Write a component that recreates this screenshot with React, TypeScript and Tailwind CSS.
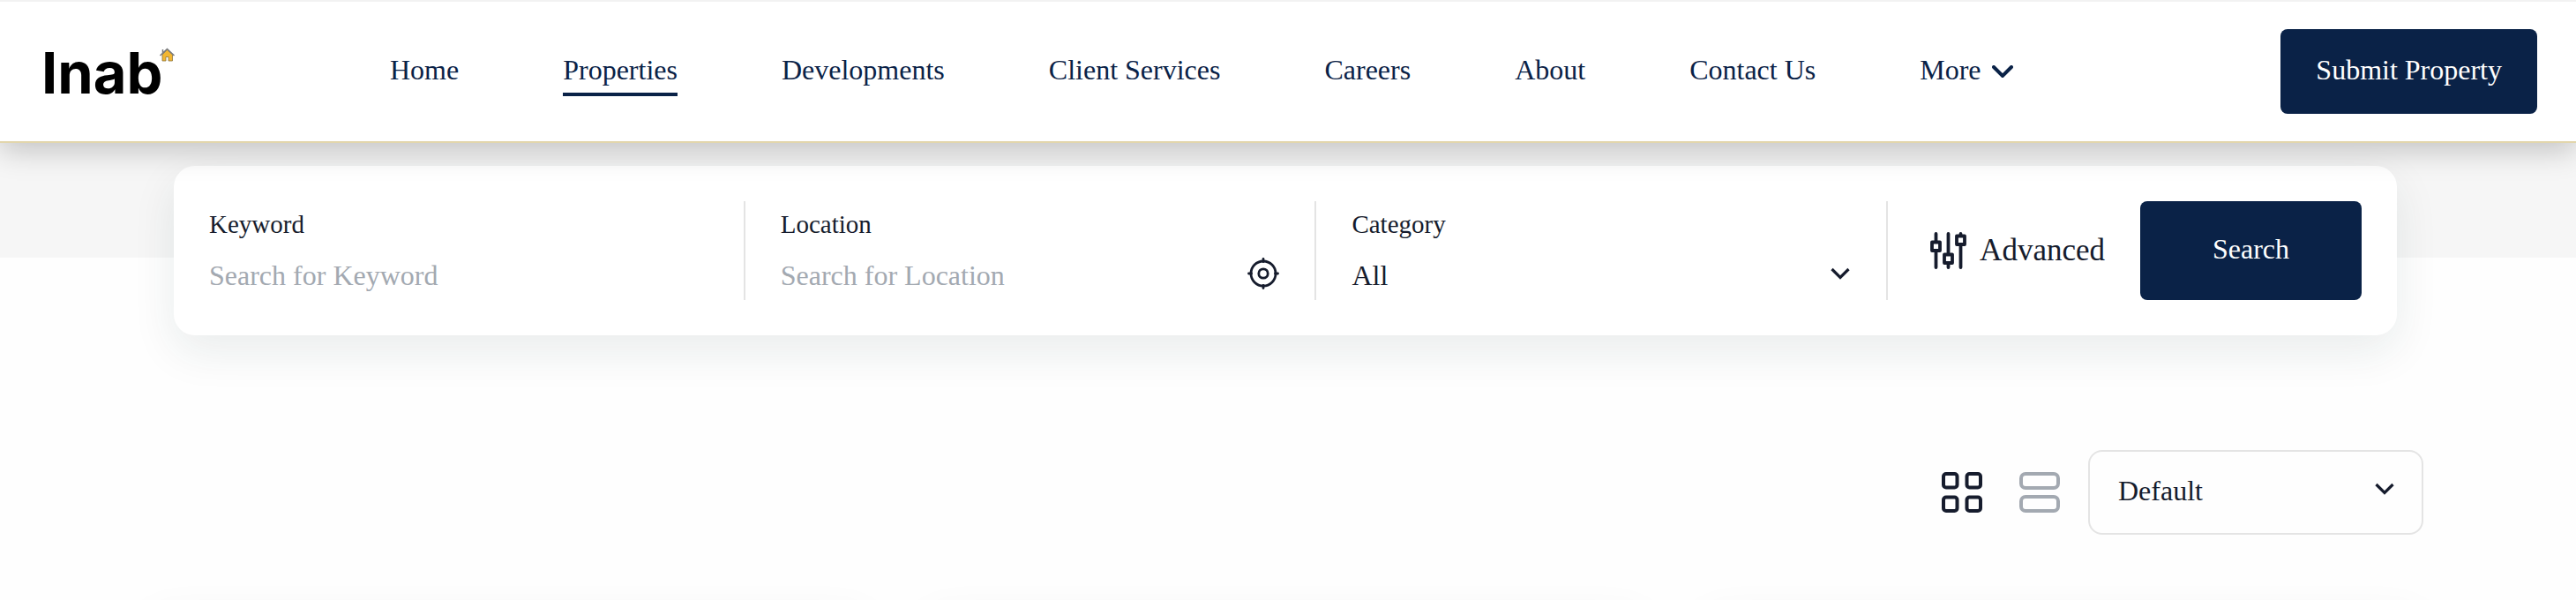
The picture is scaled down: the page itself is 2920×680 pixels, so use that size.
import { useState } from 'react'

const navLinks = ['Home', 'Properties', 'Developments', 'Client Services', 'Careers', 'About', 'Contact Us']

function Chevron({ className = '' }: { className?: string }) {
  return (
    <svg width="24" height="14" viewBox="0 0 24 14" fill="none" className={className} aria-hidden="true">
      <path d="M2 2l10 10L22 2" stroke="currentColor" strokeWidth="4" strokeLinecap="round" />
    </svg>
  )
}

function SelectArrow() {
  return (
    <svg width="24" height="14" viewBox="0 0 24 14" fill="none" className="pointer-events-none mb-1 shrink-0" aria-hidden="true">
      <path d="M2.500 2l9.500 9.500L21.500 2" stroke="currentColor" strokeWidth="3.2" />
    </svg>
  )
}

function SlidersIcon() {
  return (
    <svg width="42" height="42" viewBox="0 0 42 42" fill="none" stroke="currentColor" strokeWidth="3.8" strokeLinecap="round" strokeLinejoin="round" aria-hidden="true">
      <path d="M6.5 2v9M6.5 21.500v18.500M20.500 2v23M20.500 35.500v4.500M34.500 2v2M34.500 14v26" />
      <path d="M2 11.500h9v9.500h-9zM16 25.500h9v9.500h-9zM30 4.500h9v9.500h-9z" />
    </svg>
  )
}

function TargetIcon() {
  return (
    <svg width="36" height="36" viewBox="0 0 36 36" fill="none" stroke="currentColor" strokeWidth="2.8" strokeLinecap="round" aria-hidden="true">
      <circle cx="18" cy="18" r="14" />
      <circle cx="18" cy="18" r="5.200" />
      <path d="M18 1.500v3M18 31.500v3M1.500 18h3M31.500 18h3" />
    </svg>
  )
}

function GridIcon() {
  return (
    <svg width="46" height="46" viewBox="0 0 46 46" fill="none" stroke="currentColor" strokeWidth="4" aria-hidden="true">
      <rect x="2" y="2" width="15.500" height="15.500" rx="3" />
      <rect x="28.500" y="2" width="15.500" height="15.500" rx="3" />
      <rect x="2" y="28.500" width="15.500" height="15.500" rx="3" />
      <rect x="28.500" y="28.500" width="15.500" height="15.500" rx="3" />
    </svg>
  )
}

function ListIcon() {
  return (
    <svg width="46" height="46" viewBox="0 0 46 46" fill="none" stroke="currentColor" strokeWidth="4" aria-hidden="true">
      <rect x="2" y="2" width="42" height="16" rx="5" />
      <rect x="2" y="28" width="42" height="16" rx="5" />
    </svg>
  )
}

function Logo() {
  return (
    <a href="#" aria-label="Inab" className="block">
      <svg width="160" height="88" viewBox="-8 -12 160 88" aria-hidden="true">
        <text x="-3" y="57" fontFamily="Inter, sans-serif" fontWeight="700" fontSize="65">Inab</text>
        <path d="M134 13v7h4v-4.500h3v4.500h4.500v-7l-6-5.500z" fill="#f2b632" stroke="#8a7440" strokeWidth="0.8" />
        <path d="M131.500 14l8-7.500 8 7.500M134.500 11V7" fill="none" stroke="#77797c" strokeWidth="1.500" />
      </svg>
    </a>
  )
}

function Header() {
  return (
    <header className="relative z-10 flex items-center border-y-2 border-t-[#f2f2f2] border-b-[#e2d6ac] bg-white py-[31px] pr-11 pl-[42px] shadow-[0_8px_32px_rgba(0,0,0,0.22)]">
      <Logo />
      <nav className="ml-60 flex items-center gap-[118px] pb-1 text-[32px] leading-9 text-[#0a2247]">
        {navLinks.map((label) => (
          <a
            key={label}
            href="#"
            className={`border-y-4 border-t-transparent py-2 ${label === 'Properties' ? 'border-b-[#0a2247]' : 'border-b-transparent'}`}
          >
            {label}
          </a>
        ))}
        <button type="button" className="flex items-center gap-3">
          More
          <Chevron className="mt-1" />
        </button>
      </nav>
      <button type="button" className="ml-auto h-24 rounded-lg bg-[#0a2247] px-10 pb-1 text-[32px] text-white">
        Submit Property
      </button>
    </header>
  )
}

function SearchForm() {
  const field = 'flex flex-1 flex-col gap-5 border-r-2 border-[#e4e4e4] px-10 py-2'
  const labelText = 'text-[29px] leading-9'
  const control = 'h-10 w-full min-w-0 bg-transparent text-[32px] leading-10 outline-none placeholder:text-[#a3a9b1]'

  return (
    <form
      className="relative mx-[30px] flex items-stretch rounded-3xl bg-white py-10 pr-10 shadow-[0_18px_50px_rgba(20,60,60,0.09)]"
      onSubmit={(e) => e.preventDefault()}
    >
      <div className={field}>
        <label htmlFor="keyword" className={labelText}>Keyword</label>
        <input id="keyword" type="text" placeholder="Search for Keyword" className={control} />
      </div>
      <div className={field}>
        <label htmlFor="location" className={labelText}>Location</label>
        <div className="flex items-start">
          <input id="location" type="text" placeholder="Search for Location" className={control} />
          <button type="button" aria-label="Use my location">
            <TargetIcon />
          </button>
        </div>
      </div>
      <div className={field}>
        <label htmlFor="category" className={labelText}>Category</label>
        <div className="flex items-center">
          <select id="category" className={`${control} appearance-none`}>
            <option>All</option>
          </select>
          <SelectArrow />
        </div>
      </div>
      <button type="button" className="flex items-center gap-[14px] pr-10 pl-12 text-[35px]">
        <SlidersIcon />
        Advanced
      </button>
      <button type="submit" className="w-[251px] rounded-lg bg-[#0a2247] pb-1 text-[32px] text-white">
        Search
      </button>
    </form>
  )
}

function Toolbar() {
  const [view, setView] = useState<'grid' | 'list'>('grid')

  return (
    <div className="mt-[130px] flex items-center justify-end">
      <button
        type="button"
        aria-label="Grid view"
        onClick={() => setView('grid')}
        className={view === 'grid' ? '' : 'text-[#a3a9b1]'}
      >
        <GridIcon />
      </button>
      <button
        type="button"
        aria-label="List view"
        onClick={() => setView('list')}
        className={view === 'list' ? 'ml-[42px]' : 'ml-[42px] text-[#a3a9b1]'}
      >
        <ListIcon />
      </button>
      <div className="ml-8 flex h-24 w-[380px] items-center rounded-2xl border-2 border-[#e4e4e4] pr-[30px] pb-1 pl-8">
        <select aria-label="Sort by" className="h-10 w-full appearance-none text-[32px] leading-10 outline-none">
          <option>Default</option>
        </select>
        <SelectArrow />
      </div>
    </div>
  )
}

export default function App() {
  return (
    <div className="flex h-screen flex-col overflow-hidden bg-[#fefefe] font-['Liberation_Serif',serif] text-[#161c2d]">
      <Header />
      <div className="h-[130px] shrink-0 bg-[#f6f6f6]" />
      <main className="mr-[173px] ml-[167px] -mt-[104px]">
        <SearchForm />
        <Toolbar />
        <div className="mt-[84px] grid grid-cols-3 gap-[60px]">
          {[1, 2, 3].map((card) => (
            <div key={card} className="h-96 rounded-3xl bg-white shadow-[0_10px_50px_rgba(0,0,0,0.06)]" />
          ))}
        </div>
      </main>
    </div>
  )
}
